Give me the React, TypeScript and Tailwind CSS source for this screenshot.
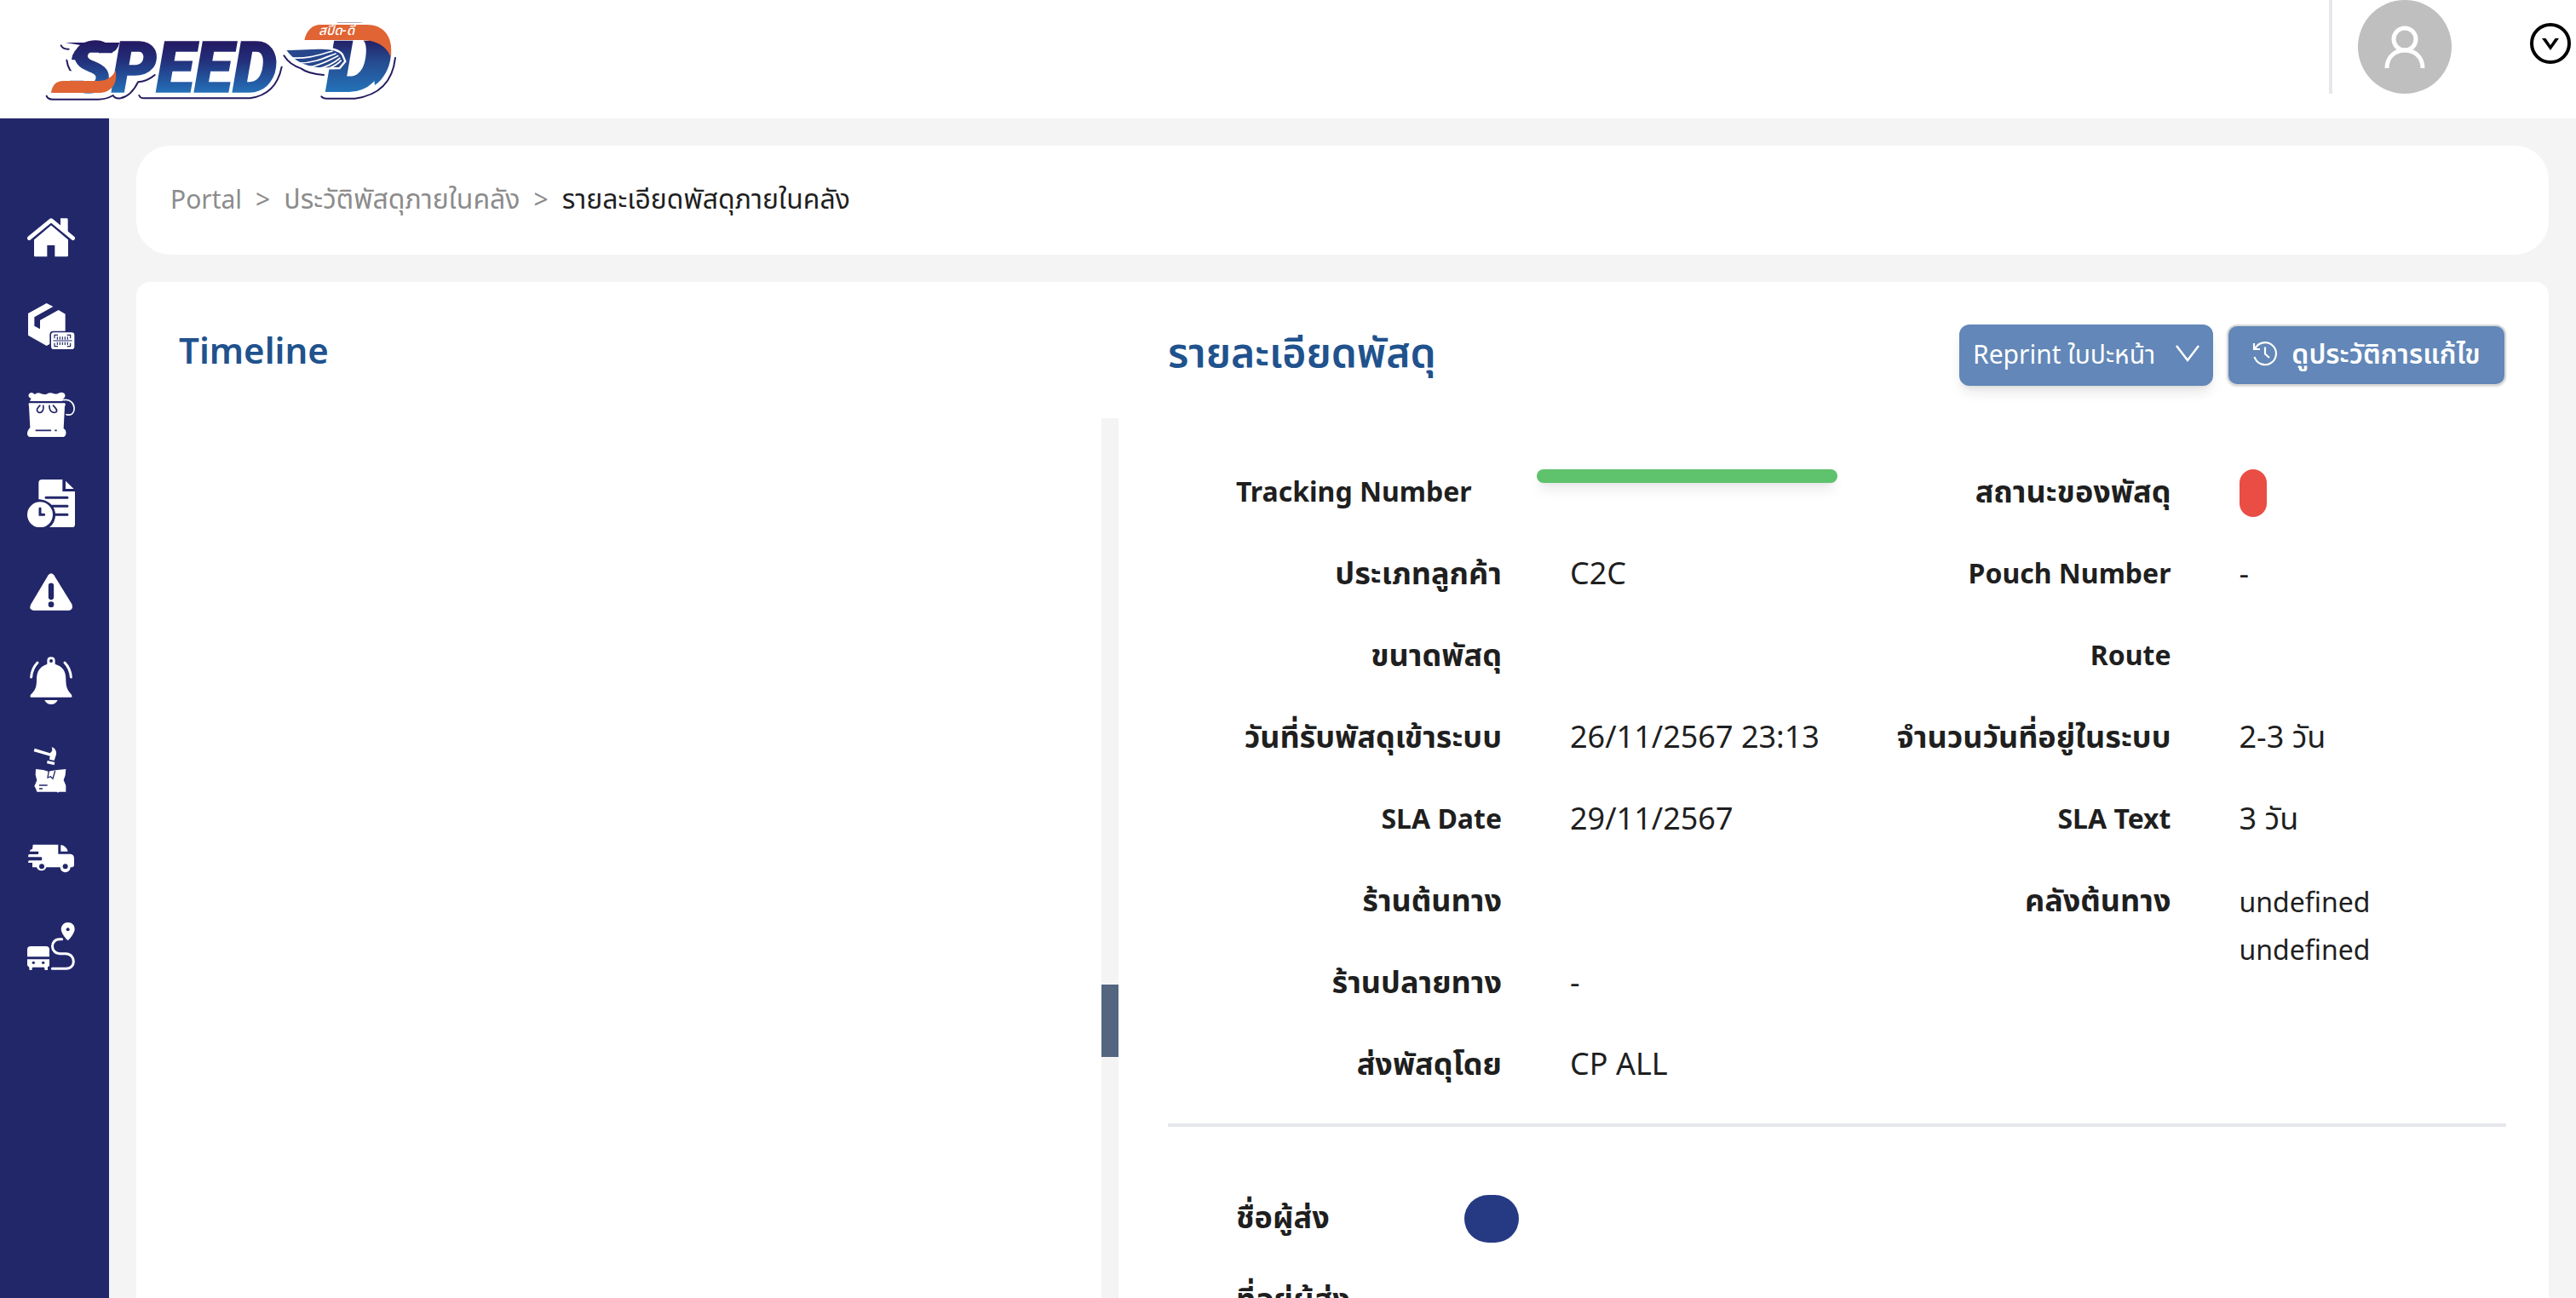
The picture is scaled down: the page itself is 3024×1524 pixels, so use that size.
import type { ReactNode } from "react";

const thaiFont = "font-['Noto_Sans','Noto_Sans_Thai','Open_Sans',sans-serif]";

function Logo() {
  return (
    <svg viewBox="0 0 1500 417" className="h-[139px] w-[500px]" role="img" aria-label="SPEED-D">
      <defs>
        <linearGradient id="word" gradientUnits="userSpaceOnUse" x1="0" y1="147" x2="0" y2="325">
          <stop offset="0" stopColor="#241a63" />
          <stop offset="0.35" stopColor="#232d78" />
          <stop offset="1" stopColor="#2470b8" />
        </linearGradient>
        <linearGradient id="emblem" gradientUnits="userSpaceOnUse" x1="0" y1="140" x2="0" y2="325">
          <stop offset="0" stopColor="#231f66" />
          <stop offset="0.4" stopColor="#264a8e" />
          <stop offset="1" stopColor="#2373ba" />
        </linearGradient>
      </defs>
      <g fill="none" stroke="#231c60" strokeWidth="6" strokeLinecap="round" strokeLinejoin="round">
        <path d="M164 338 Q168 350 185 350 H345 Q375 350 398 336 Q405 349 425 346 Q462 338 486 289 Q520 286 545 264" />
        <path d="M490 336 Q494 346 506 346 H880 Q972 334 992 236" />
        <path d="M215 160 Q222 174 242 173 M235 212 Q240 248 265 267" />
        <path d="M1000 196 Q1020 228 1060 241 Q1085 260 1140 264" />
        <path d="M1132 340 Q1138 347 1150 347 H1250 Q1378 330 1392 204" />
      </g>
      <g fontFamily="Roboto, sans-serif" fontWeight="900" fontStyle="italic">
        <text x="243" y="323" fontSize="248" fill="url(#word)" stroke="url(#word)" strokeWidth="5">SPEED</text>
        <text x="1152" y="319" fontSize="326" fill="url(#emblem)" stroke="url(#emblem)" strokeWidth="12">D</text>
      </g>
      <path d="M230 150 H421 Q412 184 388 185 H318 Q292 188 290 214 L252 210 Q256 176 288 160 Z" fill="url(#word)" />
      <path d="M236 250 H304 Q304 272 330 284 H236 Z" fill="#fff" />
      <path d="M352 187 H412 L406 206 H352 Q338 206 330 200 Z" fill="#fff" />
      <path d="M180 327 Q186 285 222 285 H345 Q390 284 407 248 C416 300 388 327 345 327 Z" fill="#e06434" />
      <path d="M1060 80 H1390 V143 H1060 Z" fill="#fff" />
      <path d="M1072 141 C1080 108 1098 87 1130 87 H1290 C1350 87 1385 125 1377 200 C1360 160 1320 141 1275 141 Z" fill="#e06434" />
      <path d="M1300 141 C1340 150 1366 170 1376 200 C1372 240 1350 280 1320 300 Z" fill="url(#emblem)" />
      <path d="M1275 141 C1320 141 1360 160 1377 200 L1377 160 L1330 120 Z" fill="#e06434" />
      <path d="M1002 174 L1120 170 C1160 168 1190 172 1206 192 L1216 216 L1196 240 L1130 242 C1060 236 1030 212 1002 174 Z" fill="#27468c" stroke="#fff" strokeWidth="7" />
      <path d="M1030 204 C1090 208 1130 190 1172 180 M1056 222 C1110 222 1150 200 1184 188 M1090 236 C1130 230 1160 212 1192 196 M1122 242 C1150 236 1176 222 1198 204 M1158 241 C1176 234 1190 226 1202 212" fill="none" stroke="#fff" strokeWidth="5" />
      <text x="1122" y="124" fontSize="46" fontStyle="italic" fontWeight="500" fill="#fff" fontFamily="Noto Sans, Noto Sans Thai, sans-serif">สปีด-ดี</text>
    </svg>
  );
}

const NAVY = "#22276a";

const navItems: { label: string; icon: ReactNode }[] = [
  {
    label: "Home",
    icon: (
      <>
        <path d="M24 86 L84 34 L144 86 V147 Q144 151 140 151 H97 V111 H70 V151 H28 Q24 151 24 147 Z" />
        <path d="M6 88 L84 22 L162 88" fill="none" stroke={NAVY} strokeWidth="28" />
        <path d="M117 16 H139 Q143 16 143 20 V68 L117 44 Z" />
        <path d="M7 86 L84 23 L161 86" fill="none" stroke="#fff" strokeWidth="14" strokeLinejoin="round" strokeLinecap="round" />
      </>
    ),
  },
  {
    label: "Parcels",
    icon: (
      <>
        <path d="M3 39 L68 3 L91 15 L25 52 V83 L45 94 V63 L110 27 L134 41 V101 H92 Q79 101 79 114 V147 L68 153 L3 116 Z" />
        <rect x="84" y="106" width="82" height="59" rx="10" />
        <path d="M96 127 V115 H108 M140 115 H152 V127 M96 143 V155 H108 M140 155 H152 V143 M91 135 H158 M106 121 V131 M115 121 V131 M124 121 V131 M133 121 V131 M142 121 V131 M106 140 V150 M115 140 V150 M124 140 V150 M133 140 V150 M142 140 V150" fill="none" stroke={NAVY} strokeWidth="3.5" />
      </>
    ),
  },
  {
    label: "Pouches",
    icon: (
      <>
        <path d="M10 34 L14 26 C0 24 2 6 16 6 Q22 7 26 12 Q36 4 46 8 Q58 14 68 11 Q80 4 92 9 Q102 13 110 8 Q120 3 130 8 Q138 18 128 26 L124 36 H10 Z" />
        <path d="M6 43 H132 Q137 48 132 54 L128 132 Q139 138 136 152 Q134 162 124 162 H12 Q2 162 0 152 Q0 138 10 130 L6 54 Q4 48 6 43 Z" />
        <path d="M128 32 C176 24 176 96 138 83" fill="none" stroke="#fff" strokeWidth="5" strokeLinecap="round" />
        <path d="M56 50 C60 72 48 80 38 74 C30 68 36 60 46 50 M78 50 C76 72 90 80 102 74 C108 68 100 60 90 50 M29 139 H84 M97 139 H104" fill="none" stroke={NAVY} strokeWidth="5" />
      </>
    ),
  },
  {
    label: "Parcel history",
    icon: (
      <>
        <path d="M52 0 H124 V42 H168 V158 Q168 168 158 168 H78 C104 150 110 100 72 80 Q55 70 40 70 V12 Q40 0 52 0 Z" />
        <path d="M135 5 L164 33 H135 Z" />
        <path d="M66 64 H141 M86 94 H141 M96 124 H141" stroke={NAVY} strokeWidth="9" strokeLinecap="round" />
        <circle cx="45" cy="124" r="53" fill={NAVY} />
        <circle cx="45" cy="124" r="45" />
        <path d="M45 102 V124 H59" fill="none" stroke={NAVY} strokeWidth="9" strokeLinecap="round" />
      </>
    ),
  },
  {
    label: "Problems",
    icon: (
      <>
        <path d="M74 25 Q84 12 94 25 L157 127 Q164 146 148 149 H21 Q5 146 12 129 Z" />
        <path d="M84 62 V102" stroke={NAVY} strokeWidth="19" strokeLinecap="round" />
        <circle cx="84" cy="128" r="10" fill={NAVY} />
      </>
    ),
  },
  {
    label: "Notifications",
    icon: (
      <>
        <path d="M70 26 V14 Q70 1 84 1 Q98 1 98 14 V26 C124 34 136 50 136 80 C136 108 142 118 156 134 Q160 142 154 143 H14 Q8 142 12 134 C28 118 33 108 33 80 C33 50 46 34 70 26 Z" />
        <circle cx="84" cy="15" r="6" fill={NAVY} />
        <path d="M61 153 H107 Q100 168 84 168 Q68 168 61 153 Z" />
        <path d="M36 21 Q16 42 14 72 M132 21 Q152 42 154 72" fill="none" stroke="#fff" strokeWidth="9" strokeLinecap="round" />
      </>
    ),
  },
  {
    label: "Damaged parcels",
    icon: (
      <>
        <path d="M26 11 L80 28 Q92 20 86 6 Q104 12 102 32 L95 54 L78 50 L80 38 L23 22 Z" />
        <path d="M71 54 L97 60 L95 70 L69 64 Z" />
        <path d="M30 84 L56 87 L74 92 L100 88 L136 84 L134 106 L128 122 L136 142 V164 H112 L108 167 L104 164 H34 Q32 154 25 144 L34 124 L29 104 Z" />
        <path d="M76 90 L72 114 L82 110 L90 118 L98 90 M42 141 H71 M42 153 H54" fill="none" stroke={NAVY} strokeWidth="4" />
      </>
    ),
  },
  {
    label: "Transport",
    icon: (
      <>
        <path d="M20 38 H109 V71 H152 Q165 73 165 86 V110 Q165 117 158 118 H152 A18 18 0 0 1 116 118 H67 A18 18 0 0 1 33 118 H18 V102 H4 Q2 97 6 94 H50 Q54 86 50 82 H4 Q2 76 6 72 H38 Q42 64 38 62 H9 Q8 56 18 53 Z" />
        <path d="M118 39 Q138 42 143 62 H118 Z" />
        <circle cx="51" cy="115" r="9" fill={NAVY} />
        <circle cx="134" cy="115" r="9" fill={NAVY} />
      </>
    ),
  },
  {
    label: "Routes",
    icon: (
      <>
        <path d="M12 84 H66 Q78 84 78 96 V121 H0 V96 Q0 84 12 84 Z" />
        <path d="M0 130 H78 V152 Q76 156 72 157 V168 H62 L60 158 H18 L16 168 H8 L6 157 Q0 154 0 150 Z" />
        <circle cx="22" cy="142" r="5" fill={NAVY} />
        <circle cx="56" cy="142" r="5" fill={NAVY} />
        <path d="M143 0 C160 0 170 14 166 30 Q160 48 143 64 Q126 48 120 30 C116 14 128 0 143 0 Z" />
        <circle cx="143" cy="25" r="6" fill={NAVY} />
        <path d="M122 59 H114 C80 60 80 108 114 110 H136 C172 112 172 164 136 163 H88" fill="none" stroke="#fff" strokeWidth="9" strokeLinecap="round" />
      </>
    ),
  },
];

function Field({ label, latin = false, children }: { label: string; latin?: boolean; children?: ReactNode }) {
  return (
    <div className="grid h-13 grid-cols-[328px_1fr] gap-x-20">
      <dt className={latin ? "text-right text-[32px] font-bold whitespace-nowrap" : "text-right font-bold whitespace-nowrap"}>
        {label}
      </dt>
      <dd>{children}</dd>
    </div>
  );
}

export default function App() {
  return (
    <div className={`flex h-screen flex-col overflow-hidden bg-[#f4f4f4] text-[#1f1f1f] ${thaiFont}`}>
      <header className="flex h-[139px] shrink-0 items-start justify-between bg-white">
        <a href="#home">
          <Logo />
        </a>
        <div className="flex items-center">
          <div className="flex h-[110px] items-center border-l-4 border-gray-200 pl-[30px]">
            <span className="flex size-[110px] items-center justify-center rounded-full bg-[#bfbfbf]">
              <svg viewBox="0 0 48 50" className="h-[50px] w-12" fill="none" stroke="#fff" strokeWidth="5" aria-hidden="true">
                <circle cx="24" cy="16" r="13" />
                <path d="M3 50 C3 22 45 22 45 50" />
              </svg>
            </span>
          </div>
          <button type="button" aria-label="Account menu" className="mr-1.5 mb-2 ml-[92px]">
            <svg viewBox="0 0 48 48" className="size-12" fill="none" aria-hidden="true">
              <circle cx="24" cy="24" r="22" stroke="#000" strokeWidth="4" />
              <path d="M14 18 H18.500 L24 26 L29.500 18 H34 L24 32 Z" fill="#000" />
            </svg>
          </button>
        </div>
      </header>

      <div className="flex min-h-0 flex-1">
        <nav aria-label="Main" className="flex w-32 shrink-0 flex-col gap-12 bg-[#22276a] pt-28 pl-8">
          {navItems.map((item) => (
            <a key={item.label} href="#" aria-label={item.label} className="size-14">
              <svg viewBox="0 0 168 168" className="size-14" fill="#fff" aria-hidden="true">
                {item.icon}
              </svg>
            </a>
          ))}
        </nav>

        <main className="flex min-w-0 flex-1 flex-col gap-8 px-8 pt-8">
          <nav aria-label="Breadcrumb" className="flex h-32 shrink-0 items-center rounded-[40px] bg-white px-10 pb-1 text-[32px]">
            <ol className="flex items-baseline gap-4 text-[#8c8c8c]">
              <li className="text-[30px]"><a href="#portal">Portal</a></li>
              <li className="text-[30px]" aria-hidden="true">&gt;</li>
              <li><a href="#history">ประวัติพัสดุภายในคลัง</a></li>
              <li className="text-[30px]" aria-hidden="true">&gt;</li>
              <li className="text-[#1f1f1f]">รายละเอียดพัสดุภายในคลัง</li>
            </ol>
          </nav>

          <div className="flex min-h-0 flex-1 overflow-hidden rounded-t-2xl bg-white">
            <section className="flex-1 pt-12 pl-[50px]">
              <h2 className="text-[42px] leading-[64px] font-semibold text-[#20528d]">Timeline</h2>
            </section>
            <div className="mt-40 w-5 shrink-0 bg-[#f4f4f4] pt-[665px]">
              <div className="h-[85px] bg-[#53657f]" />
            </div>

            <section className="w-[1679px] shrink-0 pt-[50px] pr-[50px] pl-[58px]">
              <div className="flex h-[72px] items-start">
                <h2 className="flex-1 text-[48px] leading-[64px] font-semibold text-[#20528d]">รายละเอียดพัสดุ</h2>
                <button type="button" className="flex h-[72px] w-[298px] items-center justify-between rounded-xl bg-[#6287b8] px-4 pb-1 text-[30px] whitespace-nowrap text-white shadow-lg">
                  Reprint ใบปะหน้า
                  <svg viewBox="0 0 28 20" className="h-5 w-7" fill="none" stroke="#fff" strokeWidth="2.500" aria-hidden="true">
                    <path d="M1 1 L14 18 L27 1" />
                  </svg>
                </button>
                <button type="button" className="ml-4 flex h-[72px] w-[328px] items-center justify-center gap-4 rounded-xl border-2 border-[#d9d9d9] bg-[#6287b8] pb-1 text-[32px] font-semibold whitespace-nowrap text-white shadow-sm">
                  <svg viewBox="0 0 30 30" className="size-[30px]" fill="none" stroke="#fff" strokeWidth="2.200" aria-hidden="true">
                    <path d="M3.500 9 A13 13 0 1 1 2.500 19 M2 3 V10 H9 M15 7.500 V15.500 L20 20" />
                  </svg>
                  ดูประวัติการแก้ไข
                </button>
              </div>

              <div className="mt-[98px] grid grid-cols-2 text-[36px] leading-[52px]">
                <dl className="flex flex-col gap-11 pl-16">
                  <div className="flex h-13 gap-x-[76px] pl-4">
                    <dt className="text-[32px] font-bold whitespace-nowrap">Tracking Number</dt>
                    <dd className="h-4 w-[353px] shrink-0 rounded-lg bg-[#5fc26c] shadow-lg" />
                  </div>
                  <Field label="ประเภทลูกค้า">C2C</Field>
                  <Field label="ขนาดพัสดุ" />
                  <Field label="วันที่รับพัสดุเข้าระบบ">26/11/2567 23:13</Field>
                  <Field label="SLA Date" latin>29/11/2567</Field>
                  <Field label="ร้านต้นทาง" />
                  <Field label="ร้านปลายทาง">-</Field>
                  <Field label="ส่งพัสดุโดย">CP ALL</Field>
                </dl>
                <dl className="flex flex-col gap-11 pl-16">
                  <Field label="สถานะของพัสดุ">
                    <span className="block h-14 w-8 rounded-full bg-[#ea4d44]" />
                  </Field>
                  <Field label="Pouch Number" latin>-</Field>
                  <Field label="Route" latin />
                  <Field label="จำนวนวันที่อยู่ในระบบ">2-3 วัน</Field>
                  <Field label="SLA Text" latin>3 วัน</Field>
                  <Field label="คลังต้นทาง">
                    <p className="text-[32px] leading-[56px]">undefined<br />undefined</p>
                  </Field>
                </dl>
              </div>

              <hr className="mt-11 border-t-4 border-gray-200" />

              <dl className="flex flex-col gap-11 pt-20 pl-20 text-[36px] leading-[52px]">
                <div className="grid h-13 grid-cols-[268px_1fr]">
                  <dt className="font-bold whitespace-nowrap">ชื่อผู้ส่ง</dt>
                  <dd className="h-14 w-16 rounded-[28px] bg-[#263a84]" />
                </div>
                <div className="grid h-13 grid-cols-[268px_1fr]">
                  <dt className="font-bold whitespace-nowrap">ที่อยู่ผู้ส่ง</dt>
                  <dd />
                </div>
              </dl>
            </section>
          </div>
        </main>
      </div>
    </div>
  );
}
